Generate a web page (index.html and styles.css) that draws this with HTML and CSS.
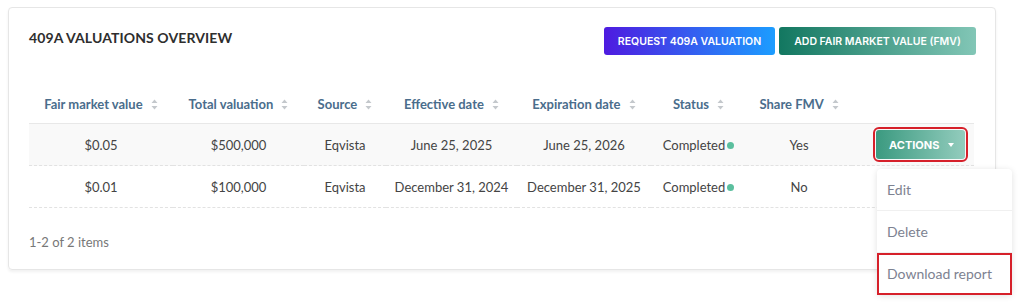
FILE: index.html
```html
<!DOCTYPE html>
<html lang="en">
<head>
    <meta charset="UTF-8">
    <meta name="viewport" content="width=device-width, initial-scale=1.0">
    <title>409A Valuations Overview</title>
    <link rel="stylesheet" href="styles.css">
</head>
<body>
    <div class="page">
        <div class="card">
            <div class="card-head">
                <h2 class="title">409A VALUATIONS OVERVIEW</h2>
                <div class="head-buttons">
                    <button class="btn btn-purple">REQUEST 409A VALUATION</button>
                    <button class="btn btn-green">ADD FAIR MARKET VALUE (FMV)</button>
                </div>
            </div>

            <table class="grid">
                <colgroup>
                    <col style="width:144px">
                    <col style="width:131px">
                    <col style="width:82px">
                    <col style="width:131px">
                    <col style="width:134px">
                    <col style="width:95px">
                    <col style="width:106px">
                    <col style="width:122px">
                </colgroup>
                <thead>
                    <tr>
                        <th>Fair market value <span class="sort"><svg width="7" height="11" viewBox="0 0 7 11"><path d="M3.5 0.5 L6.5 4 H0.5 Z M3.5 10.5 L6.5 7 H0.5 Z" fill="currentColor"/></svg></span></th>
                        <th>Total valuation <span class="sort"><svg width="7" height="11" viewBox="0 0 7 11"><path d="M3.5 0.5 L6.5 4 H0.5 Z M3.5 10.5 L6.5 7 H0.5 Z" fill="currentColor"/></svg></span></th>
                        <th>Source <span class="sort"><svg width="7" height="11" viewBox="0 0 7 11"><path d="M3.5 0.5 L6.5 4 H0.5 Z M3.5 10.5 L6.5 7 H0.5 Z" fill="currentColor"/></svg></span></th>
                        <th>Effective date <span class="sort"><svg width="7" height="11" viewBox="0 0 7 11"><path d="M3.5 0.5 L6.5 4 H0.5 Z M3.5 10.5 L6.5 7 H0.5 Z" fill="currentColor"/></svg></span></th>
                        <th>Expiration date <span class="sort"><svg width="7" height="11" viewBox="0 0 7 11"><path d="M3.5 0.5 L6.5 4 H0.5 Z M3.5 10.5 L6.5 7 H0.5 Z" fill="currentColor"/></svg></span></th>
                        <th>Status <span class="sort"><svg width="7" height="11" viewBox="0 0 7 11"><path d="M3.5 0.5 L6.5 4 H0.5 Z M3.5 10.5 L6.5 7 H0.5 Z" fill="currentColor"/></svg></span></th>
                        <th>Share FMV <span class="sort"><svg width="7" height="11" viewBox="0 0 7 11"><path d="M3.5 0.5 L6.5 4 H0.5 Z M3.5 10.5 L6.5 7 H0.5 Z" fill="currentColor"/></svg></span></th>
                        <th></th>
                    </tr>
                </thead>
                <tbody>
                    <tr class="hover">
                        <td>$0.05</td>
                        <td>$500,000</td>
                        <td>Eqvista</td>
                        <td>June 25, 2025</td>
                        <td>June 25, 2026</td>
                        <td>Completed<span class="dot"></span></td>
                        <td>Yes</td>
                        <td class="actions">
                            <div class="actions-wrap">
                                <button class="btn-actions marked">ACTIONS <span class="caret"></span></button>
                                <ul class="menu">
                                    <li>Edit</li>
                                    <li>Delete</li>
                                    <li class="marked-item">Download report</li>
                                </ul>
                            </div>
                        </td>
                    </tr>
                    <tr>
                        <td>$0.01</td>
                        <td>$100,000</td>
                        <td>Eqvista</td>
                        <td>December 31, 2024</td>
                        <td>December 31, 2025</td>
                        <td>Completed<span class="dot"></span></td>
                        <td>No</td>
                        <td class="actions"></td>
                    </tr>
                </tbody>
            </table>

            <div class="footer">1-2 of 2 items</div>
        </div>
    </div>
</body>
</html>
```

FILE: styles.css
```css
html, body {
    min-height: 304px;
}

body {
    margin: 0;
    padding: 0;
    background: #ffffff;
    font-family: "Lato", "Liberation Sans", sans-serif;
    color: #333333;
}

.page {
    padding: 7px 0 0 8px;
}

.card {
    width: 988px;
    box-sizing: border-box;
    border: 1px solid #e6e6e6;
    border-radius: 4px;
    box-shadow: 0 2px 3px rgba(0, 0, 0, 0.06);
    padding: 19px 20px 17px 20px;
}

.card-head {
    display: flex;
    justify-content: space-between;
    align-items: flex-start;
}

.title {
    margin: 0;
    font-size: 14px;
    line-height: 22px;
    font-weight: 700;
    color: #2e2e2e;
    letter-spacing: 0.1px;
}

.head-buttons {
    display: flex;
    gap: 4px;
    margin-right: -1px;
}

.btn {
    height: 28px;
    border: none;
    border-radius: 3px;
    padding: 0;
    color: #ffffff;
    font-family: "Inter", "Liberation Sans", sans-serif;
    font-size: 10.5px;
    font-weight: 600;
    white-space: nowrap;
    cursor: pointer;
}

.btn-purple {
    width: 171px;
    background: linear-gradient(90deg, #4e1be0, #1c9dff);
}

.btn-green {
    width: 197px;
    background: linear-gradient(90deg, #127760, #82c6b6);
}

/* Tabelle */
.grid {
    width: 945px;
    margin-top: 29px;
    border-collapse: collapse;
    table-layout: fixed;
}

.grid th {
    height: 38px;
    padding: 1px 0 0 0;
    font-size: 13px;
    font-weight: 700;
    color: #4a6d8c;
    text-align: center;
    border-bottom: 1px solid #e8e8e8;
    white-space: nowrap;
}

.sort {
    display: inline-block;
    margin-left: 5px;
    color: #c4c8cc;
    vertical-align: -1px;
}

.grid td {
    height: 41px;
    padding: 0;
    font-size: 13px;
    color: #444444;
    text-align: center;
    border-bottom: 1px dashed #e2e2e2;
    white-space: nowrap;
}

.grid tr.hover td {
    background: #f9f9f9;
}

.dot {
    display: inline-block;
    width: 7px;
    height: 7px;
    margin-left: 2px;
    border-radius: 50%;
    background: #5bbf9e;
    vertical-align: 1px;
}

.grid td.actions {
    text-align: right;
    padding-right: 9px;
}

.actions-wrap {
    display: inline-block;
    position: relative;
    vertical-align: middle;
}

.btn-actions {
    display: block;
    width: 89px;
    height: 29px;
    border: none;
    border-radius: 3px;
    background: linear-gradient(90deg, #3b9a80, #93ccbd);
    color: #ffffff;
    font-family: "Inter", "Liberation Sans", sans-serif;
    font-size: 11px;
    font-weight: 700;
    padding: 0 0 0 2px;
}

.btn-actions.marked {
    outline: 2px solid #d6202a;
    outline-offset: 1px;
}

.caret {
    display: inline-block;
    width: 0;
    height: 0;
    margin-left: 6px;
    border-left: 3px solid transparent;
    border-right: 3px solid transparent;
    border-top: 4px solid #ffffff;
    vertical-align: 2px;
}

/* Dropdown */
.menu {
    position: absolute;
    top: 39px;
    left: 1px;
    width: 135px;
    margin: 0;
    padding: 0;
    list-style: none;
    background: #ffffff;
    border-radius: 4px;
    box-shadow: 0 1px 6px rgba(0, 0, 0, 0.12);
    text-align: left;
    z-index: 5;
}

.menu li {
    height: 41px;
    line-height: 41px;
    padding-left: 10px;
    font-size: 14px;
    color: #7d8291;
    border-bottom: 1px solid #f0f0f0;
}

.menu li:last-child {
    border-bottom: none;
    height: 42px;
    line-height: 42px;
}

.menu li.marked-item {
    outline: 2px solid #d6202a;
    outline-offset: -2px;
}

.footer {
    margin-top: 24px;
    font-size: 13px;
    line-height: 20px;
    color: #777777;
}
```
